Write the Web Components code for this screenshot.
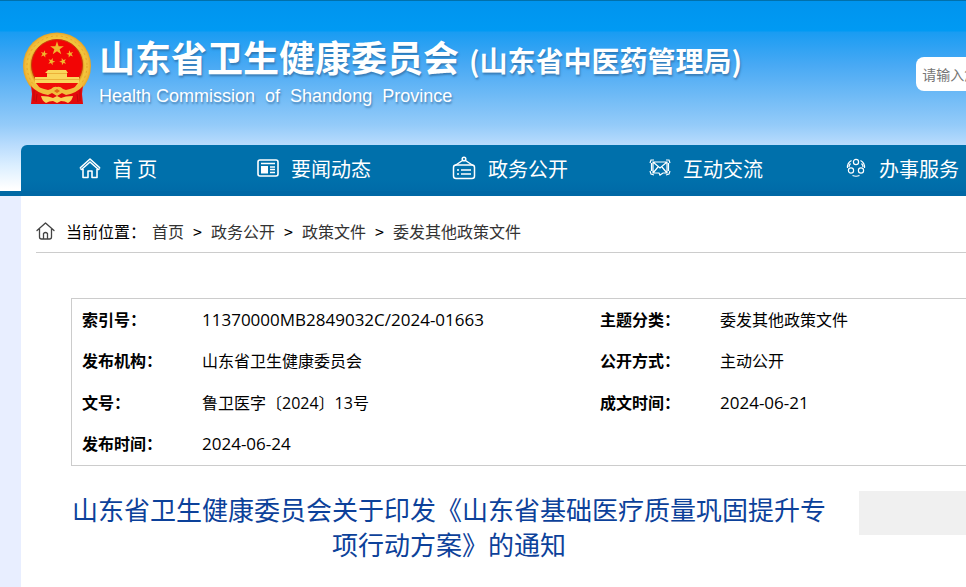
<!DOCTYPE html>
<html lang="zh-CN">
<head>
<meta charset="utf-8">
<title>山东省卫生健康委员会</title>
<style>
  html, body { margin: 0; min-height: 100vh; }
  body {
    background: #e8eeff;
    color: #000;
    font: 16px/24px "Open Sans", "Noto Sans CJK SC", sans-serif;
  }
</style>
</head>
<body>
<health-page>
  <site-header slot="header"></site-header>
  <crumb-trail></crumb-trail>
  <doc-info></doc-info>
  <doc-title>山东省卫生健康委员会关于印发《山东省基础医疗质量巩固提升专项行动方案》的通知</doc-title>
</health-page>

<script>
function define(name, html) {
  const template = document.createElement('template');
  template.innerHTML = html;
  customElements.define(name, class extends HTMLElement {
    constructor() {
      super();
      this.attachShadow({ mode: 'open' }).append(template.content.cloneNode(true));
    }
  });
}

define('health-page', `
<style>
  :host { display: flex; flex-direction: column; min-height: 100vh; overflow: hidden; }
  main { flex: 1; margin-left: 21px; background: #fff; min-width: 0; }
</style>
<slot name="header"></slot>
<main><slot></slot></main>`);

define('national-emblem', `
<style>:host { display: block; } svg { display: block; width: 70px; height: 74px; }</style>
<svg viewBox="0 0 70 74" role="img" aria-label="国徽">
  <defs>
    <radialGradient id="gold" cx="50%" cy="50%" r="50%">
      <stop offset=".74" stop-color="#d98b14"/><stop offset=".82" stop-color="#f3c63e"/>
      <stop offset=".93" stop-color="#f1ba38"/><stop offset="1" stop-color="#e6a324"/>
    </radialGradient>
    <polygon id="star" points="0,-10 2.3,-3.1 9.5,-3.1 3.7,1.2 5.9,8.1 0,3.9 -5.9,8.1 -3.7,1.2 -9.5,-3.1 -2.3,-3.1"/>
  </defs>
  <ellipse cx="35" cy="34" rx="34" ry="33.5" fill="url(#gold)"/>
  <circle cx="35" cy="34" r="30" fill="none" stroke="#e5a62a" stroke-width="1" stroke-dasharray="2 3"/>
  <circle cx="35" cy="33" r="25.500" fill="#f20505" stroke="#c83a0b" stroke-width="1"/>
  <g fill="#f1b62e">
    <use href="#star" transform="translate(35 16.500) scale(.72)"/>
    <use href="#star" transform="translate(22 22) scale(.38) rotate(15)"/>
    <use href="#star" transform="translate(48 22) scale(.38) rotate(-15)"/>
    <use href="#star" transform="translate(29.500 29.500) scale(.38) rotate(20)"/>
    <use href="#star" transform="translate(41 29.500) scale(.38) rotate(-20)"/>
  </g>
  <path d="M26 38h18l2 3h-1v4h12v6H13v-6h12v-4h-2z" fill="#fad65c"/>
  <path d="M25 41.500h20M13 47.500h44" stroke="#e5a02a" stroke-width=".7"/>
  <path d="M14 51h42l-7 9H21z" fill="#f00d08"/>
  <path d="M9 53q8 6 18 7h16q10-1 18-7l-1 9 1 10H9l1-10z" fill="#e30a0c"/>
  <path d="M10 51q6 5 16 7l3-1q3-3 6-2 3-1 6 2l3 1q10-2 16-7l1 3q-6 7-17 9l-4-2-5 3-5-3-4 2Q15 61 9 54z" fill="#f2be3c"/>
  <path d="M19 64q8 0 12 2l4-2 4 2q4-2 12-2-1 5-5 7-3-2-7-2l-4 2-4-2q-4 0-7 2-4-2-5-7z" fill="#f8d055"/>
  <path d="M32 59l3-2 3 2-3 2z" fill="#df6a16"/>
  <path d="M12 58v11M15 62l-1 8M58 58v11M55 62l1 8" fill="none" stroke="#b5080b" stroke-width=".8"/>
</svg>`);

define('site-header', `
<style>
  :host {
    display: block; border-top: 1px solid #0070ab; border-bottom: 5px solid #0068a5;
    background: linear-gradient(#0094ee 0, #009af3 30px, #199cf2 31px, #48a9f4 64px, #6ebaf6 94px, #94cbf9 124px, #b9dcfd 144px, #dcefff 165px, #fff 188px);
  }
  .brand { display: flex; align-items: flex-start; height: 144px; box-sizing: border-box; padding: 31px 0 0 22px; }
  h1 { margin: 0; white-space: nowrap; color: #fff; font: bold 36px/48px "Noto Sans CJK SC", sans-serif; text-shadow: 1px 2px 2px #285d9099; }
  .names { margin-left: 7px; flex: none; }
  .names p { margin: 0; color: #fff; white-space: pre; font: 18px/24px "Liberation Sans", Arial, sans-serif; text-shadow: 1px 2px 2px #285d9099; }
  h1 small { font-size: 28px; margin-left: 10px; }
  site-search { flex: 1; min-width: 50px; margin: 25px 0 0 174px; }
</style>
<div class="brand">
  <national-emblem></national-emblem>
  <div class="names">
    <h1>山东省卫生健康委员会<small>(山东省中医药管理局)</small></h1>
    <p>Health Commission  of  Shandong  Province</p>
  </div>
  <site-search></site-search>
</div>
<site-nav></site-nav>`);

define('site-search', `
<style>
  :host { display: block; }
  input { display: block; width: 100%; min-width: 240px; height: 34px; box-sizing: border-box; border: 0; border-radius: 8px; padding: 0 6px; background: #fff; font: 14px "Noto Sans CJK SC", sans-serif; }
  input::placeholder { color: #757575; }
</style>
<input type="text" aria-label="搜索" placeholder="请输入您">`);

define('nav-item', `
<style>
  :host { display: block; }
  a { display: flex; align-items: center; justify-content: center; gap: 12px; height: 100%; color: #fff; text-decoration: none; white-space: nowrap; font: 20px/30px "Noto Sans CJK SC", sans-serif; }
  span { padding-top: 2px; }
  ::slotted(svg) { flex: none; fill: none; stroke: #fff; }
</style>
<a href="#"><slot name="icon"></slot><span><slot></slot></span></a>`);

define('site-nav', `
<style>
  :host { display: block; background: linear-gradient(#0070ab 75%, #006ba8); border-radius: 6px 0 0 0; margin-left: 21px; overflow: hidden; }
  nav { display: grid; grid-auto-flow: column; grid-auto-columns: minmax(196px, 1fr); height: 46px; margin-left: -1px; }
</style>
<nav aria-label="主导航">
  <nav-item><svg slot="icon" width="22" height="22" viewBox="0 0 22 22" stroke-width="1.600" stroke-linejoin="round"><path d="M1 11 11 2l10 9M1 11l1.500 1.500L11 5l8.500 7.500L21 11M4 12v8.500h5V14h4v6.500h5V12"/></svg>首 页</nav-item>
  <nav-item><svg slot="icon" width="22" height="22" viewBox="0 0 22 22" stroke-width="1.600"><rect x="1" y="3" width="20" height="16" rx="2"/><path d="M4 6.500h14M13 10h5M13 12.500h5M13 15.500h5"/><path d="M4 9h7v7.500H4z" fill="#fff" stroke="none"/></svg>要闻动态</nav-item>
  <nav-item><svg slot="icon" width="24" height="24" viewBox="0 0 24 24" stroke-width="1.500"><rect x="1.500" y="9" width="21" height="13.500" rx="2.500"/><circle cx="12" cy="3" r="1.800"/><path d="M3 9.500 10.500 4.500M21 9.500 13.500 4.500M5 14h2M9 14h10M5 18h2M9 18h10"/></svg>政务公开</nav-item>
  <nav-item><svg slot="icon" width="22" height="22" viewBox="0 0 22 22" stroke-width="1.200"><path d="M4 5h14v11h-4l-3 2-1-2H4zM4 5l7 6 7-6M4 16l5-6M18 16l-5-6M1 6l1-3h3M21 6l-1-3h-3M1 14l1 3 3 1M21 14l-1 3-3 1M2.500 6v8M19.500 6v8"/></svg>互动交流</nav-item>
  <nav-item><svg slot="icon" width="22" height="22" viewBox="0 0 22 22" stroke-width="1.200"><circle cx="11" cy="5" r="2.600"/><circle cx="6" cy="13.500" r="2.600"/><circle cx="16" cy="13.500" r="2.600"/><path d="M6.500 3.500Q2 6 2.500 11M5.500 6.500Q4 8 4 10M15.500 3.500q4.500 2.500 4 7.500M16.500 6.500Q18 8 18 10M7.500 18.500q3.500 1.500 7 0"/></svg>办事服务</nav-item>
</nav>`);

define('crumb-trail', `
<style>
  :host { display: block; margin-left: 15px; border-bottom: 1px solid #ccc; padding: 23px 0 9px; }
  nav, ol { display: flex; align-items: center; white-space: nowrap; }
  ol { list-style: none; margin: 0; padding: 0; }
  nav { font-family: "Noto Sans CJK SC", sans-serif; }
  svg { flex: none; margin-right: 10px; }
  .label { margin-right: 6px; }
  a { color: #333; text-decoration: none; }
  li { display: flex; }
  li + li::before { content: ">"; width: 27px; text-align: center; }
</style>
<nav aria-label="当前位置">
  <svg width="20" height="20" viewBox="0 0 20 20" fill="none" stroke="#444" stroke-width="1.300" stroke-linejoin="round" stroke-linecap="round"><path d="M1 9.500 9.500 2 18 9.500M3.500 8v8q0 2 2 2h8q2 0 2-2V8M7.500 18v-5.500q2-2 4 0V18"/></svg>
  <span class="label">当前位置：</span>
  <ol>
    <li><a href="#">首页</a></li>
    <li><a href="#">政务公开</a></li>
    <li><a href="#">政策文件</a></li>
    <li><a href="#">委发其他政策文件</a></li>
  </ol>
</nav>`);

define('doc-info', `
<style>
  :host { display: block; margin: 45px 0 0 50px; border: 1px solid #ccc; border-right: 0; }
  table { width: 100%; height: 166px; border-collapse: collapse; table-layout: fixed; }
  th, td { padding: 0 0 0 10px; text-align: left; white-space: nowrap; font-family: "Open Sans", "Noto Sans CJK SC", sans-serif; }
  th { font-weight: bold; }
  .label { width: 110px; } .wide { width: 388px; }
  .num { font-size: 17px; }
</style>
<table>
  <tr><th class="label" scope="row">索引号：</th><td class="num wide">11370000MB2849032C/2024-01663</td><th class="label" scope="row">主题分类：</th><td>委发其他政策文件</td></tr>
  <tr><th scope="row">发布机构：</th><td>山东省卫生健康委员会</td><th scope="row">公开方式：</th><td>主动公开</td></tr>
  <tr><th scope="row">文号：</th><td>鲁卫医字〔2024〕13号</td><th scope="row">成文时间：</th><td class="num">2024-06-21</td></tr>
  <tr><th scope="row">发布时间：</th><td class="num">2024-06-24</td><td></td><td></td></tr>
</table>`);

define('doc-title', `
<style>
  :host { display: flex; align-items: flex-start; gap: 32px; margin: 25px 0 0 50px; }
  h2 { flex: 1; margin: 0; color: #0c419a; text-align: center; font: 26px/35px "Noto Sans CJK SC", sans-serif; }
  aside { flex: none; width: 107px; height: 44px; background: #f0f0f0; }
</style>
<h2><slot></slot></h2>
<aside></aside>`);
</script>
</body>
</html>
